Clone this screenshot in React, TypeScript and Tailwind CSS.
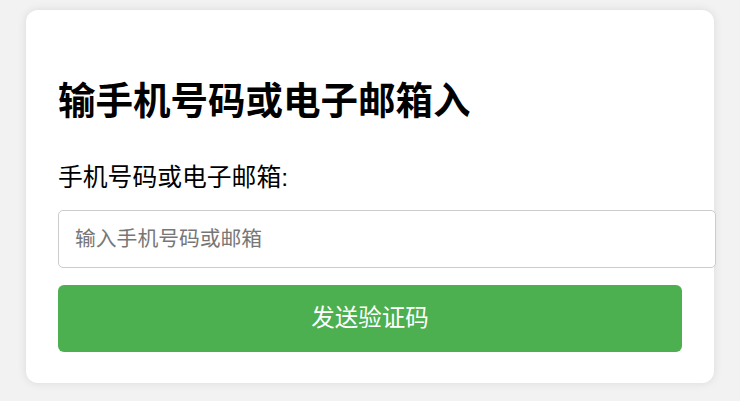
import { useState } from "react"

export default function App() {
    const [contact, setContact] = useState<string>("")

    return (
        <div className="min-h-[401px] w-[740px] bg-[#f2f2f2] pt-[10px] pl-[26px] font-['Liberation_Sans','Noto_Sans_CJK_SC',sans-serif]">
            <div className="w-[688px] rounded-xl bg-white px-8 pt-[69px] pb-[31px] shadow-[0_0_10px_rgba(0,0,0,0.1)]">
                <h1 className="text-[37.5px] leading-[44px] font-bold text-black">输手机号码或电子邮箱入</h1>

                <label htmlFor="contact" className="mt-10 block text-[24.8px] leading-[30px] text-black">
                    手机号码或电子邮箱:
                </label>

                <input
                    id="contact"
                    type="text"
                    value={contact}
                    onChange={(e) => setContact(e.target.value)}
                    placeholder="输入手机号码或邮箱"
                    className="mt-[17px] block h-[58px] w-[658px] max-w-none rounded-[5px] border border-[#cccccc] bg-white px-4 text-[20.8px] text-black outline-none placeholder:text-[#777777]"
                />

                <button
                    className="mt-[17px] block h-[67px] w-full rounded-[6px] bg-[#4caf50] text-[23.5px] text-white"
                    onClick={() => {}}
                    >发送验证码
                </button>
            </div>
        </div>
    )
}
